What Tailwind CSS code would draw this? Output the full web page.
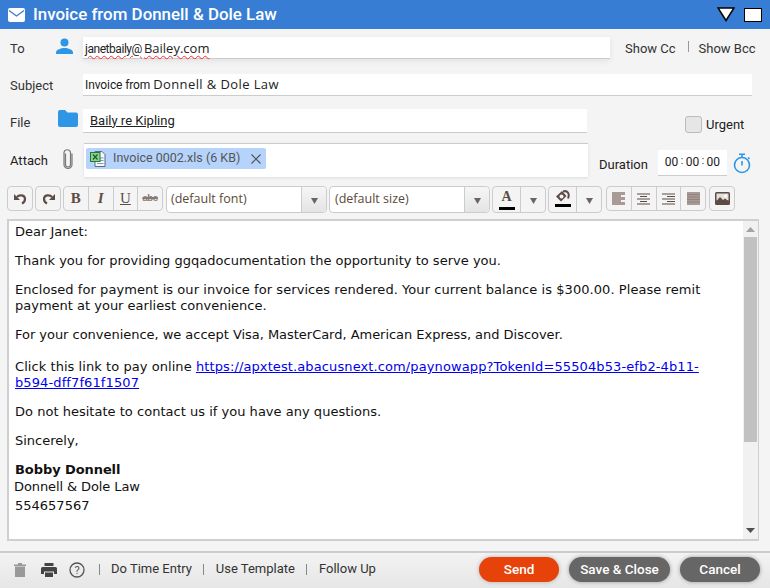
<!DOCTYPE html>
<html lang="en">
  <head>
    <meta charset="UTF-8" />
    <title>Invoice from Donnell &amp; Dole Law</title>
    <script src="https://cdn.jsdelivr.net/npm/@tailwindcss/browser@4"></script>
  </head>
  <body class="bg-[#f4f4f4] font-['Roboto',sans-serif] text-[13px] text-[#333]">
    <div class="w-[770px] h-[588px] flex flex-col overflow-hidden">
      <!-- Title bar -->
      <header class="h-[29px] bg-[#377dd4] flex items-center pl-[8px] pr-[8px] shrink-0">
        <svg width="17" height="14" viewBox="0 0 17 14"><rect width="17" height="14" rx="2" fill="#fff" /><path d="M1 2.500 8.500 8 16 2.500" fill="none" stroke="#377dd4" stroke-width="1.300" /></svg>
        <h1 class="ml-[8px] text-[16.900px] font-medium text-white leading-none">Invoice from Donnell &amp; Dole Law</h1>
        <div class="ml-auto flex items-center gap-[9px]">
          <svg width="18" height="15" viewBox="0 0 18 15"><path d="M1 1h16L9 13.500z" fill="#fff" stroke="#000" stroke-width="1.500" /></svg>
          <div class="w-[18px] h-[14px] bg-white border-[1.500px] border-black"></div>
        </div>
      </header>

      <!-- To -->
      <div class="flex items-center h-[22px] mt-[8px] pl-[10px]">
        <span class="w-[46px] mt-[2px]">To</span>
        <svg width="17" height="17" viewBox="0 0 17 17" class="mb-[3px]"><circle cx="8.500" cy="4.500" r="4" fill="#2f96e6" /><path d="M0 16v-1.500C0 11.500 5 10 8.500 10s8.500 1.500 8.500 4.500V16z" fill="#2f96e6" /></svg>
        <div class="ml-[10px] w-[527px] h-[22px] bg-white border-b border-[#ccc] shadow-[0_2px_6px_rgba(0,0,0,0.08)] pl-[2px] pt-[2px] flex items-center">
          <span class="text-[12px] text-[#222] underline decoration-wavy decoration-red-500 decoration-[0.5px] underline-offset-2 tracking-[-0.45px]">janetbaily@</span><span class="ml-[2px] text-[13px] text-[#222] underline decoration-wavy decoration-red-500 decoration-[0.5px] underline-offset-2 font-['Open_Sans',sans-serif]">Bailey.com</span>
        </div>
        <span class="ml-[15px] mt-[2px]">Show Cc</span>
        <span class="ml-[12px] w-px h-[11px] bg-[#999] mb-[3px]"></span>
        <span class="ml-[10px] mt-[2px]">Show Bcc</span>
      </div>

      <!-- Subject -->
      <div class="flex items-center h-[22px] mt-[15px] pl-[10px]">
        <span class="w-[73px] mt-[2px]">Subject</span>
        <div class="w-[669px] h-[22px] bg-white border-b border-[#ccc] pl-[2px] flex items-center text-[#222]">
          <span class="text-[12px] tracking-[-0.1px]">Invoice from&nbsp;</span><span class="font-['Open_Sans',sans-serif] text-[13px] tracking-[0.4px]">Donnell &amp; Dole Law</span>
        </div>
      </div>

      <!-- File -->
      <div class="flex items-center h-[24px] mt-[13px] pl-[10px]">
        <span class="w-[48px] mt-[3px]">File</span>
        <svg width="20" height="17" viewBox="0 0 20 17" class="mb-[6px]"><path d="M0 2a2 2 0 0 1 2-2h5l2.500 2.500H18a2 2 0 0 1 2 2V15a2 2 0 0 1-2 2H2a2 2 0 0 1-2-2z" fill="#2f96e6" /></svg>
        <div class="ml-[5px] w-[504px] h-[24px] bg-white border-b border-[#ccc] pl-[7px] flex items-center">
          <span class="underline text-[#222]">Baily re Kipling</span>
        </div>
        <div class="ml-[98px] flex items-center mb-[-7px]">
          <span class="w-[17px] h-[17px] rounded-[3px] border border-[#bbb] bg-[#e6e6e6]"></span>
          <span class="ml-[4px] text-[#222]">Urgent</span>
        </div>
      </div>

      <!-- Attach -->
      <div class="flex items-center h-[34px] mt-[10px] pl-[10px]">
        <span class="w-[52px] mt-[1px] text-[#222]">Attach</span>
        <svg width="12" height="22" viewBox="0 0 12 22" class="mt-[-2px]"><path d="M3.500 5v11a2.500 2.500 0 0 0 5 0V4a3.300 3.300 0 0 0-6.500 0v12a4 4 0 0 0 8 0V5" transform="translate(0 0.500)" fill="none" stroke="#777" stroke-width="1.200" /></svg>
        <div class="ml-[10px] w-[504px] h-[34px] bg-white border-t border-[#ccc] shadow-[0_1px_3px_rgba(0,0,0,0.1)] pl-[2px] pt-[4px]">
          <div class="w-[180px] h-[21px] bg-[#b5d3fb] rounded-[2px] flex items-center pl-[4px] text-[12.500px] text-[#555]">
            <svg width="16" height="16" viewBox="0 0 16 16"><path d="M5 .5h7l3 3v12H5z" fill="#f4f8fc" stroke="#5c6b80" /><path d="M10 7h3.500M10 9.500h3.500M7 12.500h6.500" stroke="#8397ad" /><rect x=".500" y="1.500" width="9.500" height="9" fill="#8fd08f" stroke="#1f7a35" /><path d="M3 3.500l4.500 5M7.500 3.500 3 8.500" stroke="#14602a" stroke-width="1.200" /></svg>
            <span class="ml-[7px]">Invoice 0002.xls (6 KB)</span>
            <svg width="10" height="10" viewBox="0 0 10 10" class="ml-[11px]"><path d="M.5.500l9 9M9.500.500l-9 9" stroke="#555" stroke-width="1.200" /></svg>
          </div>
        </div>
        <span class="ml-[11px] mt-[9px] text-[#222]">Duration</span>
        <div class="ml-[10px] mt-[5px] w-[69px] h-[26px] bg-white border-b border-[#ccc] flex items-center justify-center gap-[2.500px] text-[12px] text-[#222]">
          <span>00</span><span class="text-[10px] -mt-[4px]">:</span><span>00</span><span class="text-[10px] -mt-[4px]">:</span><span>00</span>
        </div>
        <svg width="18" height="21" viewBox="0 0 18 21" class="ml-[6px] mt-[6px]"><circle cx="9" cy="12" r="7.500" fill="none" stroke="#2f96e6" stroke-width="1.600" /><path d="M6 1.200h6M9 1.200v3M9 8v4.500M15 4.500l1.500 1.500" fill="none" stroke="#2f96e6" stroke-width="1.600" /></svg>
      </div>

      <!-- Toolbar -->
      <div class="flex items-start h-[27px] mt-[9px] pl-[7px] text-[#5d4c46]">
        <div class="w-[26px] h-[25px] rounded-[4px] border border-[#ccc] flex items-center justify-center">
          <svg width="13" height="12" viewBox="0 0 13 12"><path d="M3 4C5 1.500 11 1.500 11 6 11 8 10 9.500 8 10.500" fill="none" stroke="#5d4c46" stroke-width="2.200" /><path d="M0 1v6h6z" fill="#5d4c46" /></svg>
        </div>
        <div class="ml-[2px] w-[26px] h-[25px] rounded-[4px] border border-[#ccc] flex items-center justify-center">
          <svg width="13" height="12" viewBox="0 0 13 12"><path d="M10 4C8 1.500 2 1.500 2 6 2 8 3 9.500 5 10.500" fill="none" stroke="#5d4c46" stroke-width="2.200" /><path d="M13 1v6H7z" fill="#5d4c46" /></svg>
        </div>
        <div class="ml-[2px] w-[100px] h-[25px] rounded-[4px] border border-[#ccc] flex divide-x divide-[#ccc]">
          <span class="flex-1 flex items-center justify-center font-['Liberation_Serif',serif] font-bold text-[15px]">B</span>
          <span class="flex-1 flex items-center justify-center font-['Liberation_Serif',serif] font-bold italic text-[15px]">I</span>
          <span class="flex-1 flex items-center justify-center font-['Liberation_Serif',serif] underline text-[15px]">U</span>
          <span class="flex-1 flex items-center justify-center font-['Liberation_Sans',sans-serif] line-through decoration-2 font-bold text-[9.500px] tracking-[-0.3px] text-[#8a7a75]">abc</span>
        </div>
        <div class="ml-[3px] w-[161px] h-[27px] rounded-[4px] border border-[#ccc] bg-white flex">
          <span class="flex-1 pl-[4px] flex items-center font-['Open_Sans',sans-serif] text-[12.500px] text-[#5a4a3a]">(default font)</span>
          <span class="w-[25px] border-l border-[#ccc] bg-gradient-to-b from-[#f6f6f6] to-[#e4e4e4] flex items-center justify-center rounded-r-[4px]"><svg width="7" height="6" viewBox="0 0 7 6" class="mt-[3px]"><path d="M0 0h7L3.500 6z" fill="#6d6460" /></svg></span>
        </div>
        <div class="ml-[2px] w-[161px] h-[27px] rounded-[4px] border border-[#ccc] bg-white flex">
          <span class="flex-1 pl-[5px] flex items-center font-['Open_Sans',sans-serif] text-[12.500px] text-[#5a4a3a]">(default size)</span>
          <span class="w-[25px] border-l border-[#ccc] bg-gradient-to-b from-[#f6f6f6] to-[#e4e4e4] flex items-center justify-center rounded-r-[4px]"><svg width="7" height="6" viewBox="0 0 7 6" class="mt-[3px]"><path d="M0 0h7L3.500 6z" fill="#6d6460" /></svg></span>
        </div>
        <div class="ml-[2px] w-[54px] h-[27px] rounded-[4px] border border-[#ccc] flex">
          <span class="w-[27px] flex flex-col items-center pt-[3px]">
            <span class="font-['Liberation_Serif',serif] font-bold text-[14px] leading-[14px]">A</span>
            <span class="w-[16px] h-[3px] bg-black mt-[3px]"></span>
          </span>
          <span class="flex-1 border-l border-[#ccc] flex items-center justify-center"><svg width="7" height="6" viewBox="0 0 7 6" class="mt-[3px]"><path d="M0 0h7L3.500 6z" fill="#6d6460" /></svg></span>
        </div>
        <div class="ml-[2px] w-[54px] h-[27px] rounded-[4px] border border-[#ccc] flex">
          <span class="w-[27px] flex flex-col items-center pt-[3px]">
            <svg width="15" height="13" viewBox="0 0 15 13"><path d="M7 1 1 6.500l5 5 5.500-5.500z" fill="#5d4c46" /><circle cx="6.500" cy="6.500" r="2" fill="#f4f4f4" /><path d="M8 1.500C12.500 0 15 3.500 13 8.500" fill="none" stroke="#5d4c46" stroke-width="2" /></svg>
            <span class="w-[16px] h-[3px] bg-black mt-[1px]"></span>
          </span>
          <span class="flex-1 border-l border-[#ccc] flex items-center justify-center"><svg width="7" height="6" viewBox="0 0 7 6" class="mt-[3px]"><path d="M0 0h7L3.500 6z" fill="#6d6460" /></svg></span>
        </div>
        <div class="ml-[2px] w-[100px] h-[25px] ml-[4px] rounded-[4px] border border-[#ccc] flex divide-x divide-[#ccc]">
          <span class="flex-1 flex items-center justify-center"><svg width="13" height="13" viewBox="0 0 13 13"><path d="M0 0h13v3H9v2h4v3H9v2h4v3H0z" fill="#a89a94" /></svg></span>
          <span class="flex-1 flex items-center justify-center"><svg width="13" height="12" viewBox="0 0 13 12"><path d="M0 1h13M3 3.500h7M0 6h13M3 8.500h7M0 11h13" stroke="#5d4c46" /></svg></span>
          <span class="flex-1 flex items-center justify-center"><svg width="13" height="12" viewBox="0 0 13 12"><path d="M0 1h13M5 3.500h8M0 6h13M5 8.500h8M0 11h13" stroke="#5d4c46" /></svg></span>
          <span class="flex-1 flex items-center justify-center"><svg width="13" height="13" viewBox="0 0 13 13"><rect width="13" height="13" fill="#a89a94" /><path d="M0 2.500h13M0 5h13M0 7.500h13M0 10h13" stroke="#8a7a75" stroke-width=".7" /></svg></span>
        </div>
        <div class="ml-[3px] w-[26px] h-[25px] rounded-[4px] border border-[#ccc] flex items-center justify-center">
          <svg width="15" height="13" viewBox="0 0 15 13"><rect width="15" height="13" rx="1.500" fill="#5d4c46" /><rect x="1.500" y="1.500" width="12" height="7" fill="#e4dfdc" /><circle cx="10.500" cy="4" r="1.500" fill="#fff" /><path d="M1.500 9 5 5l3 3 2-1.500 3.500 2.500v1.500h-12z" fill="#5d4c46" /></svg>
        </div>
      </div>

      <!-- Editor -->
      <div class="mt-[6px] ml-[7px] w-[752px] h-[322px] bg-white border-2 border-[#cfcfcf] border-r-[1px] border-b-[2px] flex">
        <div class="flex-1 pl-[6px] pt-[3px] font-['DejaVu_Sans',sans-serif] text-[13px] leading-[16px] text-[#111]">
          <p>Dear Janet:</p>
          <p class="mt-[13px] tracking-[0.015px]">Thank you for providing ggqadocumentation the opportunity to serve you.</p>
          <p class="mt-[13px]"><span class="tracking-[0.06px]">Enclosed for payment is our invoice for services rendered. Your current balance is $300.00. Please remit</span><br />payment at your earliest convenience.</p>
          <p class="mt-[13px] tracking-[-0.03px]">For your convenience, we accept Visa, MasterCard, American Express, and Discover.</p>
          <p class="mt-[16px]"><span class="tracking-[0.06px]">Click this link to pay online </span><a class="text-[#0000ee] underline tracking-[0.11px]">https://apxtest.abacusnext.com/paynowapp?TokenId=55504b53-efb2-4b11-<br />b594-dff7f61f1507</a></p>
          <p class="mt-[13px] tracking-[0.02px]">Do not hesitate to contact us if you have any questions.</p>
          <p class="mt-[13px]">Sincerely,</p>
          <p class="mt-[13px] font-bold tracking-[-0.08px]">Bobby Donnell</p>
          <p class="mt-px -ml-px tracking-[-0.1px]">Donnell &amp; Dole Law</p>
          <p class="mt-[3px]">554657567</p>
        </div>
        <div class="w-[15px] bg-[#f1f1f1] flex flex-col items-center shrink-0">
          <svg width="9" height="5" viewBox="0 0 9 5" class="mt-[6px]"><path d="M0 5h9L4.500 0z" fill="#a3a3a3" /></svg>
          <div class="w-[13px] h-[205px] bg-[#c1c1c1] mt-[5px]"></div>
          <svg width="9" height="5" viewBox="0 0 9 5" class="mt-auto mb-[6px]"><path d="M0 0h9L4.500 5z" fill="#505050" /></svg>
        </div>
      </div>

      <!-- Footer -->
      <footer class="mt-[10px] h-[37px] flex-1 border-t-2 border-[#ccc] bg-gradient-to-b from-[#f3f3f3] to-[#e6e6e6] flex items-center pl-[14px] pb-[2px] text-[#333]">
        <svg width="12" height="14" viewBox="0 0 12 14"><path d="M0 1.500h12V3H0zM4 0h4v1.500H4zM1 3.500h10V14H1z" fill="#999" /></svg>
        <svg width="16" height="14" viewBox="0 0 16 14" class="ml-[15px]"><path d="M3.500 0h9v3h-9zM1.500 4h13A1.500 1.500 0 0 1 16 5.500V11h-3V8.500H3V11H0V5.500A1.500 1.500 0 0 1 1.500 4zM4 9.500h8V14H4z" fill="#444" /></svg>
        <svg width="16" height="16" viewBox="0 0 16 16" class="ml-[12px]"><circle cx="8" cy="8" r="7" fill="none" stroke="#555" stroke-width="1.300" /><text x="8" y="12" text-anchor="middle" font-size="11" font-family="Roboto" fill="#555">?</text></svg>
        <span class="ml-[14px] w-px h-[11px] bg-[#888]"></span>
        <span class="ml-[11px] mb-[2px]">Do Time Entry</span>
        <span class="ml-[11px] w-px h-[11px] bg-[#888]"></span>
        <span class="ml-[12px] mb-[2px]">Use Template</span>
        <span class="ml-[11px] w-px h-[11px] bg-[#888]"></span>
        <span class="ml-[12px] mb-[2px]">Follow Up</span>
        <button class="ml-auto w-[80px] h-[25px] rounded-full bg-[#e64209] text-white font-medium text-[13.500px] shadow-[0_0_4px_rgba(0,0,0,0.25)]">Send</button>
        <button class="ml-[10px] w-[101px] h-[25px] rounded-full bg-[#666] text-white font-medium text-[13.500px] shadow-[0_0_4px_rgba(0,0,0,0.35)]">Save &amp; Close</button>
        <button class="ml-[10px] mr-[10px] w-[80px] h-[25px] rounded-full bg-[#666] text-white font-medium text-[13.500px] shadow-[0_0_4px_rgba(0,0,0,0.35)]">Cancel</button>
      </footer>
    </div>
  </body>
</html>
